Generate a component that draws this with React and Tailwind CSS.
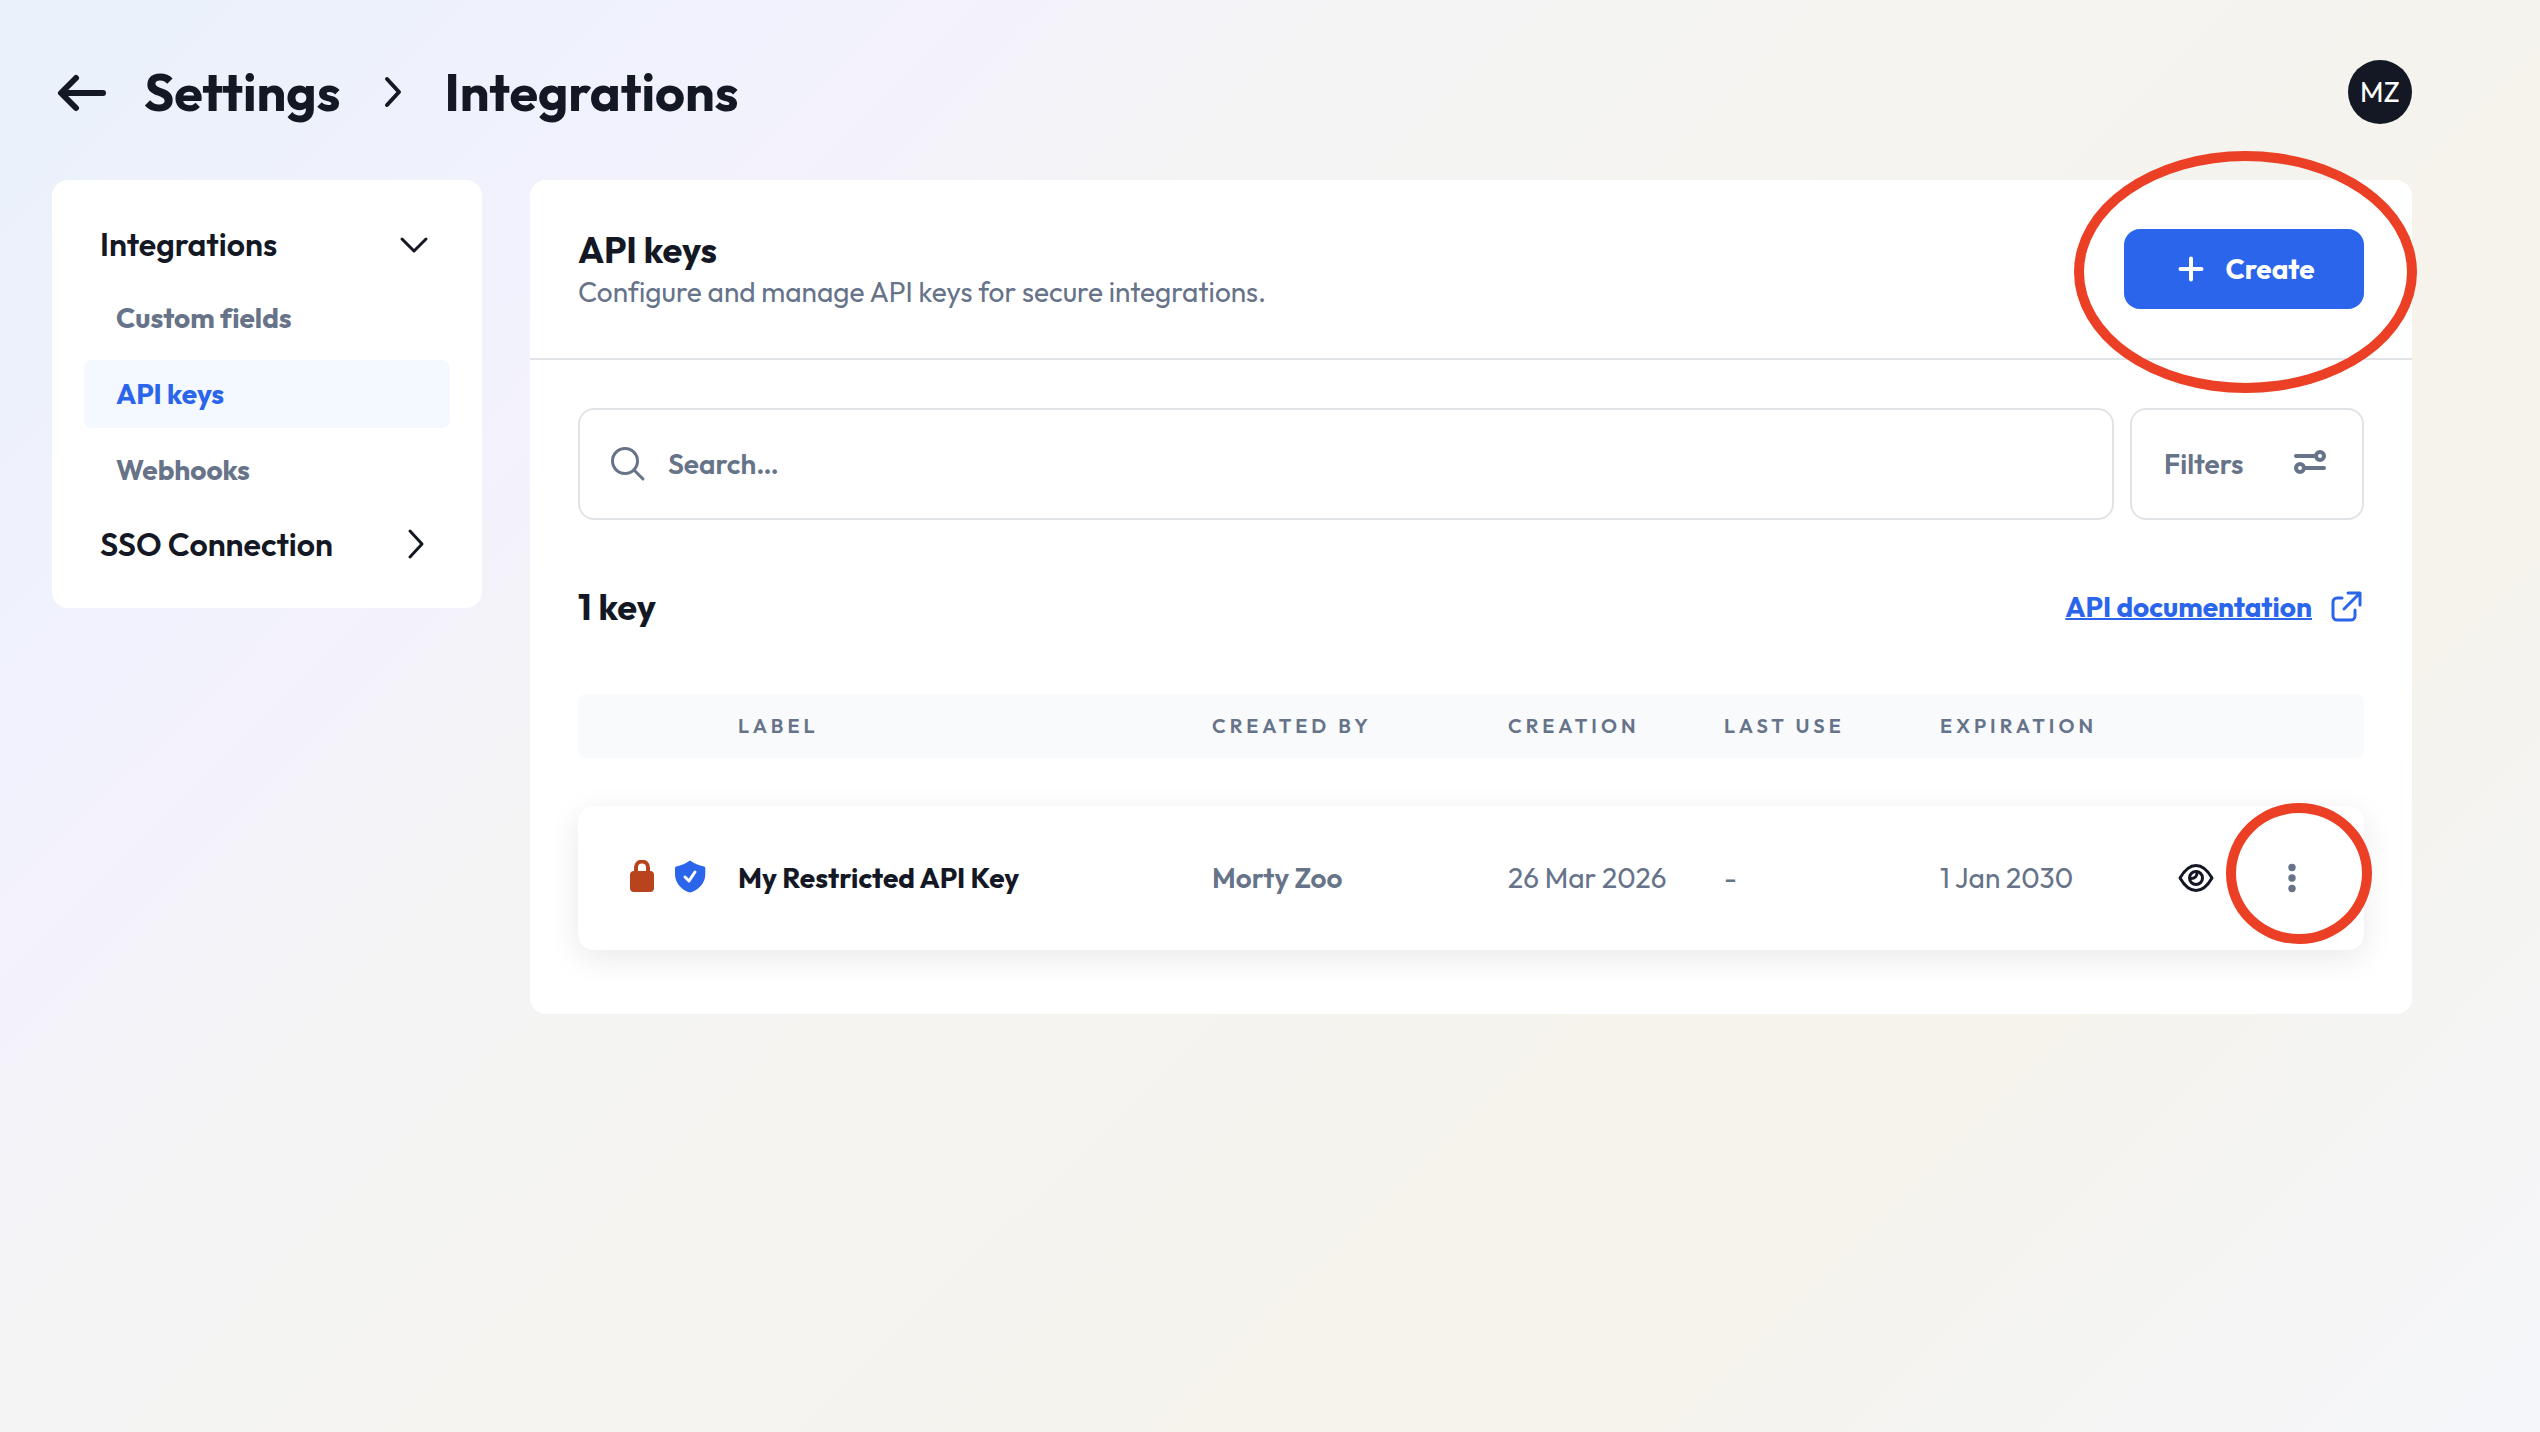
import React from 'react';

const NAV_ITEMS = [
    { label: 'Custom fields', active: false },
    { label: 'API keys', active: true },
    { label: 'Webhooks', active: false },
];

const KEYS = [
    {
        label: 'My Restricted API Key',
        createdBy: 'Morty Zoo',
        creation: '26 Mar 2026',
        lastUse: '-',
        expiration: '1 Jan 2030',
    },
];

function Icon({ size = 36, strokeWidth = 3, children, ...props }) {
    return (
        <svg
            width={size}
            height={size}
            viewBox={`0 0 ${size} ${size}`}
            fill="none"
            stroke="currentColor"
            strokeWidth={strokeWidth}
            strokeLinecap="round"
            strokeLinejoin="round"
            className="shrink-0"
            aria-hidden="true"
            {...props}
        >
            {children}
        </svg>
    );
}

function Header() {
    return (
        <header className="flex items-center justify-between mb-14">
            <div className="flex items-center gap-8">
                <button type="button" aria-label="Back">
                    <Icon size={60} strokeWidth={6}>
                        <path d="M51 31H10M24 16L9 31l15 15" />
                    </Icon>
                </button>
                <a href="#settings" className="text-[52px] leading-[64px] font-bold">Settings</a>
                <Icon size={40} strokeWidth={4}>
                    <path d="M14 7l12 13-12 13" />
                </Icon>
                <h1 className="text-[52px] leading-[64px] font-bold">Integrations</h1>
            </div>
            <button type="button" className="size-16 rounded-full bg-[#141824] text-white text-[28px]">
                MZ
            </button>
        </header>
    );
}

function Sidebar() {
    return (
        <nav className="w-[430px] shrink-0 rounded-2xl bg-white p-8 flex flex-col gap-2">
            <button type="button" className="h-16 px-4 flex items-center justify-between text-[32px] font-semibold">
                Integrations
                <Icon>
                    <path d="M4 13l12 12 12-12" />
                </Icon>
            </button>
            {NAV_ITEMS.map((item) => (
                <a
                    key={item.label}
                    href="#"
                    className={
                        item.active
                            ? 'h-17 px-8 flex items-center rounded-lg text-[28px] font-bold bg-[#f4f8ff] text-[#2b65ec]'
                            : 'h-17 px-8 flex items-center rounded-lg text-[28px] font-bold text-[#667389]'
                    }
                >
                    {item.label}
                </a>
            ))}
            <button type="button" className="h-16 px-4 flex items-center justify-between text-[32px] font-semibold">
                SSO Connection
                <Icon>
                    <path d="M12 5l12 13-12 13" />
                </Icon>
            </button>
        </nav>
    );
}

function KeysTable() {
    return (
        <table className="w-full table-fixed border-separate border-spacing-0 text-left text-[28px] text-[#667389]">
            <colgroup>
                <col className="w-[160px]" />
                <col />
                <col className="w-[296px]" />
                <col className="w-[216px]" />
                <col className="w-[216px]" />
                <col className="w-[222px]" />
                <col className="w-[202px]" />
            </colgroup>
            <thead>
                <tr className="h-16 bg-[#f8fafc] text-[20px] tracking-[0.2em]">
                    <th className="rounded-l-lg" />
                    <th className="font-semibold">LABEL</th>
                    <th className="font-semibold">CREATED BY</th>
                    <th className="font-semibold">CREATION</th>
                    <th className="font-semibold">LAST USE</th>
                    <th className="font-semibold">EXPIRATION</th>
                    <th className="rounded-r-lg" />
                </tr>
            </thead>
            <tbody className="before:block before:h-12 before:content-['']">
                {KEYS.map((key) => (
                    <tr key={key.label} className="h-36 rounded-2xl shadow-[0_8px_32px_rgba(0,0,0,0.09)]">
                        <td className="pl-11">
                            <div className="flex items-center gap-2">
                                <svg width="40" height="36" viewBox="0 2 40 36" aria-hidden="true">
                                    <rect x="8" y="13" width="24" height="21" rx="4" fill="#b8431c" />
                                    <path d="M14 15V9.500a6 6 0 0 1 12 0V15" fill="none" stroke="#b8431c" strokeWidth="4" />
                                </svg>
                                <svg width="40" height="36" viewBox="0 2 40 36" aria-hidden="true">
                                    <path
                                        d="M20 2.500c4 3 9 5 14 6 1 0 1.300 1 1.300 2v5.500c0 9-6 15-13.300 18a5 5 0 0 1-4 0C11 31 5 25 5 16v-5.500c0-1 .3-2 1.300-2 5-1 9.700-3 13.700-6z"
                                        fill="#2b65ec"
                                    />
                                    <path d="M15 19l4 4 6-9" fill="none" stroke="#fff" strokeWidth="3" strokeLinecap="round" strokeLinejoin="round" />
                                </svg>
                            </div>
                        </td>
                        <td className="font-bold text-[#141824]">{key.label}</td>
                        <td className="font-semibold">{key.createdBy}</td>
                        <td>{key.creation}</td>
                        <td>{key.lastUse}</td>
                        <td>{key.expiration}</td>
                        <td>
                            <div className="flex items-center gap-16">
                                <button type="button" aria-label="View key" className="ml-4 text-[#141824]">
                                    <Icon size={36}>
                                        <path d="M2 18C6 11 11 5.500 18 5.500S30 11 34 18c-4 7-9 12.500-16 12.500S6 25 2 18z" />
                                        <circle cx="18" cy="18" r="6.500" />
                                        <path d="M19 12c.5 4-2 6.500-6 6.500" />
                                    </Icon>
                                </button>
                                <div className="relative flex">
                                    <button type="button" aria-label="More actions">
                                        <svg width="28" height="36" viewBox="0 0 28 36" fill="currentColor" aria-hidden="true">
                                            <circle cx="14" cy="7.500" r="3.700" />
                                            <circle cx="14" cy="18" r="3.700" />
                                            <circle cx="14" cy="28.500" r="3.700" />
                                        </svg>
                                    </button>
                                    <span className="pointer-events-none absolute -top-[57px] -left-[52px] h-[141px] w-[146px] rounded-[50%] border-10 border-[#eb4025]" />
                                </div>
                            </div>
                        </td>
                    </tr>
                ))}
            </tbody>
        </table>
    );
}

export default function App() {
    return (
        <div className="min-h-screen bg-[linear-gradient(135deg,#e9f1fa_0%,#f3f2fd_24%,#f4f4f5_34%,#f5f4f0_50%,#f5f3ee_62%,#f6f3eb_69%,#f6f3eb_77%,#f4f3ef_80%,#f5f5f5_90%,#f5f6f9_98%)] pt-15 pr-32 pb-16 pl-13 font-['Outfit','Lato',sans-serif] [font-variant-ligatures:none] text-[#141824]">
            <Header />
            <div className="flex items-start gap-12">
                <Sidebar />
                <main className="min-w-0 flex-1 rounded-2xl bg-white">
                    <div className="flex h-[180px] items-center justify-between border-b-2 border-[#e1e4e6] px-12">
                        <div>
                            <h2 className="text-[36px] leading-[46px] font-bold">API keys</h2>
                            <p className="text-[28px] leading-[38px] text-[#667389]">
                                Configure and manage API keys for secure integrations.
                            </p>
                        </div>
                        <div className="relative">
                            <button
                                type="button"
                                className="flex h-20 w-60 items-center justify-center gap-4 rounded-2xl bg-[#2b65ec] text-[28px] font-bold text-white"
                            >
                                <Icon strokeWidth={4}>
                                    <path d="M18 7.500v21M7.500 18h21" />
                                </Icon>
                                Create
                            </button>
                            <span className="pointer-events-none absolute -top-[78px] -left-[50px] h-[242px] w-[343px] rounded-[50%] border-10 border-[#eb4025]" />
                        </div>
                    </div>

                    <div className="px-12 pt-12 pb-16">
                        <div className="flex gap-4 text-[28px] font-semibold text-[#667389]">
                            <label className="flex h-28 flex-1 items-center gap-5 rounded-2xl border-2 border-[#e1e4e6] px-7">
                                <Icon size={40}>
                                    <circle cx="17" cy="17" r="12.500" />
                                    <path d="M26.500 26.500L35 35" />
                                </Icon>
                                <input
                                    type="text"
                                    aria-label="Search"
                                    placeholder="Search…"
                                    className="w-full outline-none placeholder:text-[#667389]"
                                />
                            </label>
                            <button
                                type="button"
                                className="flex h-28 w-[234px] items-center justify-between rounded-2xl border-2 border-[#e1e4e6] px-8"
                            >
                                Filters
                                <Icon size={40} strokeWidth={4}>
                                    <path d="M6 12h20M34 24H14" />
                                    <circle cx="30" cy="12" r="4" />
                                    <circle cx="10" cy="24" r="4" />
                                </Icon>
                            </button>
                        </div>

                        <div className="flex items-center justify-between py-16">
                            <h3 className="text-[36px] leading-[46px] font-bold">1 key</h3>
                            <a href="#docs" className="flex items-center gap-4 text-[28px] font-bold text-[#2b65ec]">
                                <span className="underline decoration-2">API documentation</span>
                                <Icon size={36}>
                                    <path d="M14 9H9a4 4 0 0 0-4 4v14a4 4 0 0 0 4 4h14a4 4 0 0 0 4-4v-6M20 4h12v12M31 5L16 20" />
                                </Icon>
                            </a>
                        </div>

                        <KeysTable />
                    </div>
                </main>
            </div>
        </div>
    );
}
